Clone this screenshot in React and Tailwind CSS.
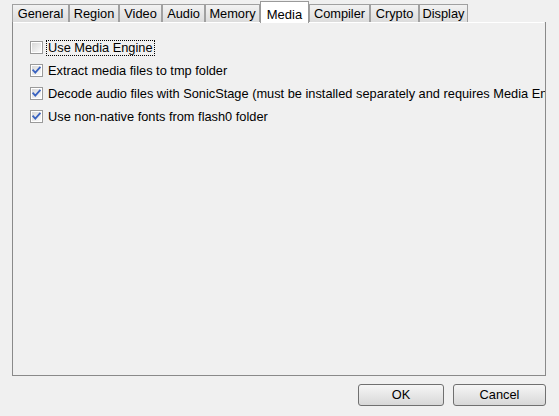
const tabs = [
  { label: 'General', w: 'w-[57px]' },
  { label: 'Region', w: 'w-[50px]' },
  { label: 'Video', w: 'w-[43px]' },
  { label: 'Audio', w: 'w-[43px]' },
  { label: 'Memory', w: 'w-[55px]' },
  { label: 'Media', w: 'w-[49px]', active: true },
  { label: 'Compiler', w: 'w-[61px]' },
  { label: 'Crypto', w: 'w-[49px]' },
  { label: 'Display', w: 'w-[49px]' },
];

const options = [
  { label: 'Use Media Engine', checked: false, focus: true },
  { label: 'Extract media files to tmp folder', checked: true },
  { label: 'Decode audio files with SonicStage (must be installed separately and requires Media Engine)', checked: true },
  { label: 'Use non-native fonts from flash0 folder', checked: true },
];

function Check({ checked }) {
  return (
    <svg width="13" height="13" viewBox="0 0 13 13" className="shrink-0">
      <defs>
        <linearGradient id={checked ? 'cbg1' : 'cbg0'} x1="0" y1="0" x2="1" y2="1">
          <stop offset="0" stopColor="#d8d8d8" />
          <stop offset="1" stopColor="#fbfbfb" />
        </linearGradient>
      </defs>
      <rect x="0.5" y="0.5" width="12" height="12" fill="#fff" stroke="#9a9a9a" />
      <rect x="2" y="2" width="9" height="9" fill={`url(#${checked ? 'cbg1' : 'cbg0'})`} />
      {checked && (
        <path d="M3.2 6.3 L5.3 8.7 L9.8 3.6" fill="none" stroke="#3a63c0" strokeWidth="1.8" strokeLinecap="square" />
      )}
    </svg>
  );
}

export default function App() {
  return (
    <div className="w-[559px] h-[416px] bg-[#f0f0f0] overflow-hidden font-['Liberation_Sans',sans-serif] text-[12.8px] text-black">
      <div className="pl-[12px] pt-[1px] h-[23px] flex items-end relative z-10">
        {tabs.map(t =>
          t.active ? (
            <div key={t.label}
              className={`${t.w} h-[22px] bg-white border border-b-0 border-[#9a9a9a] flex items-start justify-center pt-[3px] text-[13px]`}>
              {t.label}
            </div>
          ) : (
            <div key={t.label}
              className={`${t.w} h-[18px] mb-px bg-gradient-to-b from-[#f2f2f2] to-[#dcdcdc] border border-b-0 border-[#a0a0a0] flex items-center justify-center`}>
              {t.label}
            </div>
          )
        )}
      </div>
      <div className="ml-[12px] -mt-px w-[534px] h-[354px] border border-[#8a8a8a] border-t-0 bg-[#f0f0f0] pt-[13px] pl-[17px] pr-[1px] overflow-hidden">
        <div className="h-px bg-white -ml-[17px] -mt-[13px] mb-[13px]" />
        {options.map(o => (
          <div key={o.label} className="h-[23px] flex items-center gap-[4px] whitespace-nowrap">
            <Check checked={o.checked} />
            <span className={o.focus ? 'outline outline-1 outline-dotted outline-black px-px leading-[14px]' : 'px-px'}>
              {o.label}
            </span>
          </div>
        ))}
      </div>
      <div className="flex justify-end gap-[9px] pr-[13px] mt-[8px]">
        <button className="w-[86px] h-[22px] rounded-[3px] border border-[#707070] bg-gradient-to-b from-[#f6f6f6] to-[#d8d8d8] text-[12.8px]">OK</button>
        <button className="w-[93px] h-[22px] rounded-[3px] border border-[#707070] bg-gradient-to-b from-[#f6f6f6] to-[#d8d8d8] text-[12.8px]">Cancel</button>
      </div>
    </div>
  );
}
